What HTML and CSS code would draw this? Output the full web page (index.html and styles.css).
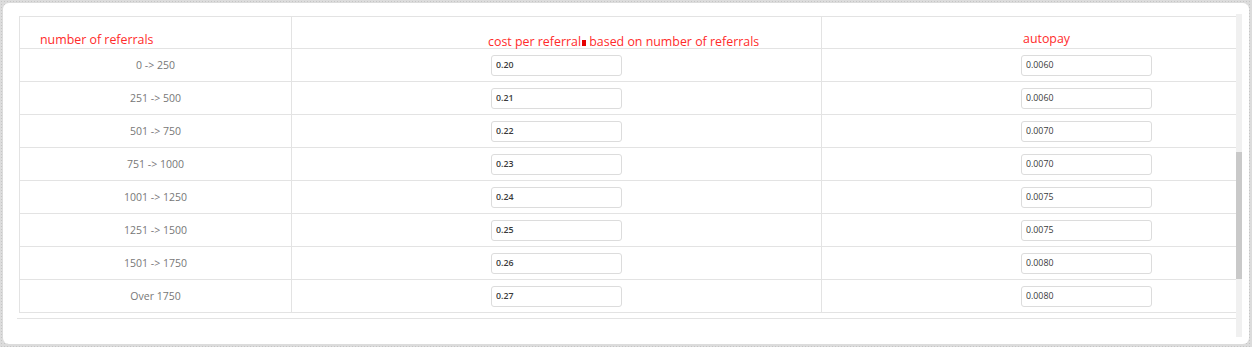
FILE: index.html
```html
<!DOCTYPE html>
<html lang="en">
<head>
<meta charset="utf-8">
<title>Referral pricing</title>
<link rel="stylesheet" href="styles.css">
</head>
<body>
<div class="card">
  <div class="pane">
    <div class="table">
      <div class="th th-count"><span class="label">number of referrals</span></div>
      <div class="th th-cost"><span class="label">cost per referral<span class="mark"></span> based on number of referrals</span></div>
      <div class="th th-auto"><span class="label">autopay</span></div>

      <div class="td range">0 -&gt; 250</div>
      <div class="td field"><input class="num num-cost" type="text" value="0.20"></div>
      <div class="td field"><input class="num" type="text" value="0.0060"></div>

      <div class="td range">251 -&gt; 500</div>
      <div class="td field"><input class="num num-cost" type="text" value="0.21"></div>
      <div class="td field"><input class="num" type="text" value="0.0060"></div>

      <div class="td range">501 -&gt; 750</div>
      <div class="td field"><input class="num num-cost" type="text" value="0.22"></div>
      <div class="td field"><input class="num" type="text" value="0.0070"></div>

      <div class="td range">751 -&gt; 1000</div>
      <div class="td field"><input class="num num-cost" type="text" value="0.23"></div>
      <div class="td field"><input class="num" type="text" value="0.0070"></div>

      <div class="td range">1001 -&gt; 1250</div>
      <div class="td field"><input class="num num-cost" type="text" value="0.24"></div>
      <div class="td field"><input class="num" type="text" value="0.0075"></div>

      <div class="td range">1251 -&gt; 1500</div>
      <div class="td field"><input class="num num-cost" type="text" value="0.25"></div>
      <div class="td field"><input class="num" type="text" value="0.0075"></div>

      <div class="td range">1501 -&gt; 1750</div>
      <div class="td field"><input class="num num-cost" type="text" value="0.26"></div>
      <div class="td field"><input class="num" type="text" value="0.0080"></div>

      <div class="td range">Over 1750</div>
      <div class="td field"><input class="num num-cost" type="text" value="0.27"></div>
      <div class="td field"><input class="num" type="text" value="0.0080"></div>
    </div>
    <div class="rule"></div>
  </div>
  <div class="scrollbar"><div class="thumb"></div></div>
</div>
</body>
</html>
```

FILE: styles.css
```css
html, body {
  margin: 0;
  padding: 0;
}

body {
  width: 1252px;
  height: 347px;
  overflow: hidden;
  font-family: "Open Sans", "Liberation Sans", sans-serif;
  background-color: #dcdcdc;
  background-image: radial-gradient(#c6c6c6 0.7px, transparent 0.9px);
  background-size: 3px 3px;
}

.card {
  box-sizing: border-box;
  width: 1246px;
  height: 341px;
  margin: 3px;
  padding: 11px 7px 0 14px;
  background: #fff;
  border-radius: 6px;
  display: flex;
  align-items: flex-start;
}

.pane {
  width: 1219px;
  flex: none;
}

/* pricing grid: tier | cost per referral | autopay */
.table {
  display: grid;
  grid-template-columns: 272px 530px 1fr;
  grid-template-rows: 32px repeat(8, 33px);
  margin: 2px 0 0 2px;
  border-top: 1px solid #e3e3e3;
  border-left: 1px solid #e3e3e3;
}

.th,
.td {
  box-sizing: border-box;
  border-bottom: 1px solid #e3e3e3;
  border-right: 1px solid #e3e3e3;
  min-width: 0;
}

.th:nth-child(3n),
.td:nth-child(3n) {
  border-right: none;
}

.th {
  color: #ff2b2b;
  font-size: 12.4px;
  line-height: 16px;
  white-space: nowrap;
}

.th .label {
  display: block;
  height: 12px;
}

.th-count {
  padding: 15px 0 0 20px;
}

.th-cost {
  padding: 17px 0 0 196px;
}

.th-auto {
  padding: 14px 0 0 201px;
}

.mark {
  display: inline-block;
  width: 4px;
  height: 6px;
  margin-left: 1px;
  background: #e60000;
  vertical-align: baseline;
}

.range {
  display: flex;
  align-items: center;
  justify-content: center;
  color: #777;
  font-size: 10.5px;
}

.field {
  display: flex;
  align-items: center;
  padding-left: 199px;
}

.num {
  box-sizing: border-box;
  width: 131px;
  height: 21px;
  margin: 0;
  padding: 0 4px;
  border: 1px solid #dcdcdc;
  border-radius: 3px;
  background: #fff;
  color: #3a3a3a;
  font-family: "Open Sans", "Liberation Sans", sans-serif;
  font-size: 8.8px;
  outline: none;
}

.num-cost {
  font-weight: 600;
}

.rule {
  margin-top: 5px;
  border-top: 1px solid #e3e3e3;
}

.scrollbar {
  flex: none;
  width: 6px;
  height: 323px;
  background: #f0f0f0;
  display: flex;
  flex-direction: column;
  padding-top: 138px;
  box-sizing: border-box;
}

.thumb {
  height: 127px;
  background: #c9c9c9;
}
```
